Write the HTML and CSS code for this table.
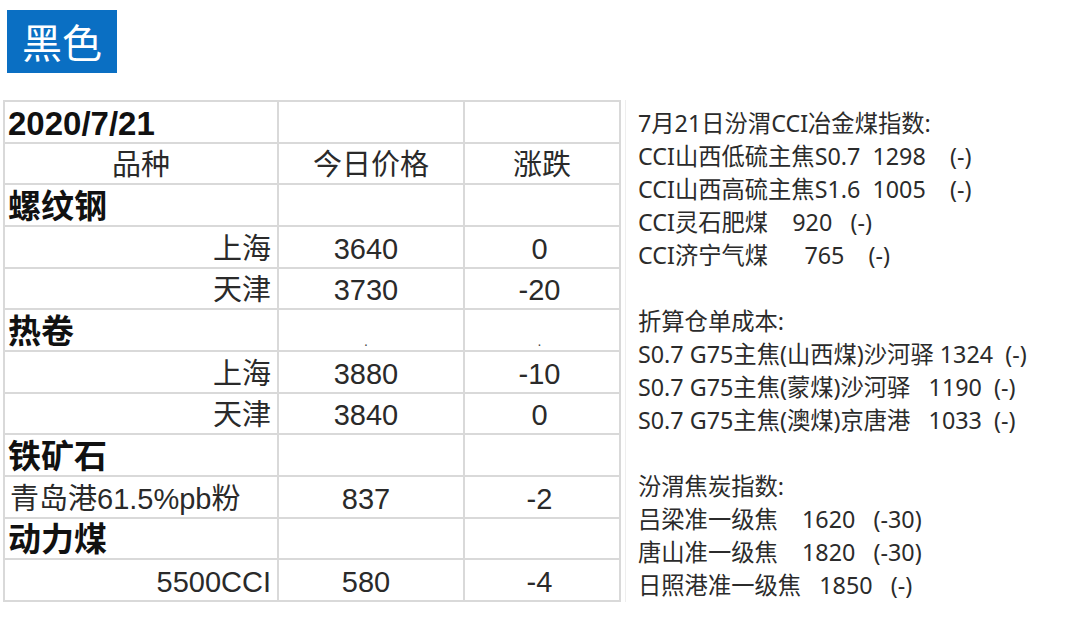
FILE: index.html
```html
<!DOCTYPE html>
<html lang="zh-CN">
<head>
<meta charset="utf-8">
<link rel="stylesheet" href="styles.css">
</head>
<body>
<div class="page">
  <div class="badge">黑色</div>
  <div class="content">
    <table class="prices">
      <colgroup><col class="c1"><col class="c2"><col class="c3"></colgroup>
      <tr><td class="bold left">2020/7/21</td><td></td><td></td></tr>
      <tr><td class="center">品种</td><td class="center">今日价格</td><td class="center">涨跌</td></tr>
      <tr><td class="bold left">螺纹钢</td><td></td><td></td></tr>
      <tr><td class="right">上海</td><td class="num">3640</td><td class="chg">0</td></tr>
      <tr><td class="right">天津</td><td class="num">3730</td><td class="chg">-20</td></tr>
      <tr><td class="bold left">热卷</td><td class="num"><span class="dot">.</span></td><td class="chg"><span class="dot">.</span></td></tr>
      <tr><td class="right">上海</td><td class="num">3880</td><td class="chg">-10</td></tr>
      <tr><td class="right">天津</td><td class="num">3840</td><td class="chg">0</td></tr>
      <tr><td class="bold left">铁矿石</td><td></td><td></td></tr>
      <tr><td class="left">青岛港61.5%pb粉</td><td class="num">837</td><td class="chg">-2</td></tr>
      <tr><td class="bold left">动力煤</td><td></td><td></td></tr>
      <tr><td class="right">5500CCI</td><td class="num">580</td><td class="chg">-4</td></tr>
    </table>
    <div class="notes">
      <p>7月21日汾渭CCI冶金煤指数:</p>
      <p>CCI山西低硫主焦S0.7&nbsp;&nbsp;1298&nbsp;&nbsp;&nbsp;&nbsp;(-)</p>
      <p>CCI山西高硫主焦S1.6&nbsp;&nbsp;1005&nbsp;&nbsp;&nbsp;&nbsp;(-)</p>
      <p>CCI灵石肥煤&nbsp;&nbsp;&nbsp;&nbsp;920&nbsp;&nbsp;&nbsp;(-)</p>
      <p>CCI济宁气煤&nbsp;&nbsp;&nbsp;&nbsp;&nbsp;&nbsp;765&nbsp;&nbsp;&nbsp;&nbsp;(-)</p>
      <p class="blank">&nbsp;</p>
      <p>折算仓单成本:</p>
      <p>S0.7 G75主焦(山西煤)沙河驿 1324&nbsp;&nbsp;(-)</p>
      <p>S0.7 G75主焦(蒙煤)沙河驿&nbsp;&nbsp;&nbsp;1190&nbsp;&nbsp;(-)</p>
      <p>S0.7 G75主焦(澳煤)京唐港&nbsp;&nbsp;&nbsp;1033&nbsp;&nbsp;(-)</p>
      <p class="blank">&nbsp;</p>
      <p>汾渭焦炭指数:</p>
      <p>吕梁准一级焦&nbsp;&nbsp;&nbsp;&nbsp;1620&nbsp;&nbsp;&nbsp;(-30)</p>
      <p>唐山准一级焦&nbsp;&nbsp;&nbsp;&nbsp;1820&nbsp;&nbsp;&nbsp;(-30)</p>
      <p>日照港准一级焦&nbsp;&nbsp;&nbsp;1850&nbsp;&nbsp;&nbsp;(-)</p>
    </div>
  </div>
</div>
</body>
</html>
```

FILE: styles.css
```css
html, body {
  margin: 0;
  padding: 0;
  background: #ffffff;
}

.page {
  width: 1080px;
  height: 619px;
  overflow: hidden;
  padding: 10px 0 0 3px;
  box-sizing: border-box;
}

.badge {
  width: 110px;
  height: 63px;
  margin-left: 4px;
  background: #0a6fc3;
  color: #ffffff;
  font-family: "Noto Sans CJK SC", sans-serif;
  font-size: 40px;
  line-height: 63px;
  text-align: center;
}

.content {
  display: flex;
  align-items: stretch;
  margin-top: 27px;
}

.prices {
  border-collapse: collapse;
  table-layout: fixed;
  width: 616px;
  font-family: "Liberation Sans", "Noto Sans CJK SC", sans-serif;
  font-size: 29px;
  color: #2a2a2a;
}

.c1 { width: 274px; }
.c2 { width: 186px; }
.c3 { width: 156px; }

.prices tr {
  height: 41.4px;
}

.prices td {
  border: 2px solid #d9d9d9;
  padding: 4px 6px 0;
  line-height: 30px;
  white-space: nowrap;
  overflow: hidden;
  vertical-align: middle;
}

.prices td.left { text-align: left; padding-left: 5px; }
.prices td.right { text-align: right; padding-right: 6px; }
.prices td.center { text-align: center; }
.prices td.num { text-align: center; padding-right: 16px; }
.prices td.chg { text-align: center; padding-right: 11px; }
.prices td.bold { font-weight: bold; color: #111; font-size: 33px; padding-left: 3px; }

.dot {
  font-size: 14px;
  position: relative;
  top: 6px;
  color: #444;
}

.notes {
  margin-left: 4px;
  border-left: 1px solid #eeeeee;
  padding: 7px 0 0 12px;
  font-family: "Noto Sans", "Noto Sans CJK SC", sans-serif;
  font-size: 23.3px;
  color: #2b2b2b;
}

.notes p {
  margin: 0;
  height: 33px;
  line-height: 33px;
  white-space: nowrap;
}
```
